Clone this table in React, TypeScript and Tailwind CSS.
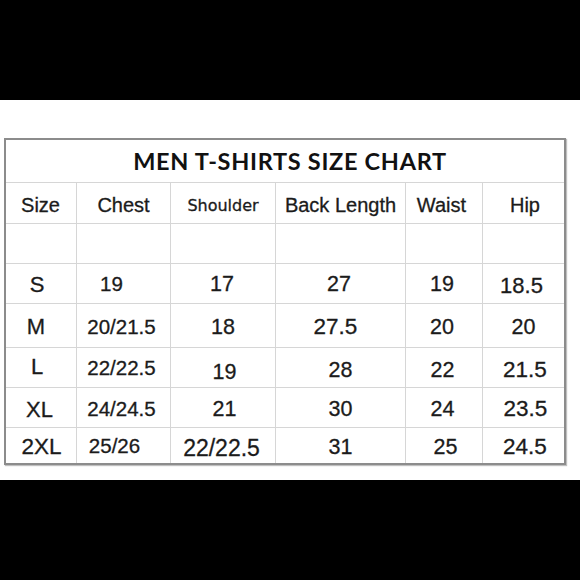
import React from "react";

type Cell = { t: string; c?: string };

const header = ["Size", "Chest", "Shoulder", "Back Length", "Waist", "Hip"];

const rows: Cell[][] = [
  [
    { t: "S", c: "text-[22px] pr-[8px] translate-y-[1px]" },
    { t: "19", c: "text-[20.5px] pr-[24px] translate-y-[1px]" },
    { t: "17", c: "text-[21.5px] pr-[2px] translate-y-[1px]" },
    { t: "27", c: "text-[21.5px] pr-[3px] translate-y-[1px]" },
    { t: "19", c: "text-[21.5px] pr-[4px] translate-y-[1px]" },
    { t: "18.5", c: "text-[22px] pr-[4px] translate-y-[2px]" },
  ],
  [
    { t: "M", c: "text-[22px] pr-[10px] translate-y-[1px]" },
    { t: "20/21.5", c: "text-[20.5px] pr-[4px] translate-y-[2px]" },
    { t: "18", c: "text-[21.5px] translate-y-[2px]" },
    { t: "27.5", c: "text-[22.5px] pr-[10px] translate-y-[2px]" },
    { t: "20", c: "text-[21.5px] pr-[4px] translate-y-[2px]" },
    { t: "20", c: "text-[21.5px] translate-y-[2px]" },
  ],
  [
    { t: "L", c: "text-[22px] pr-[8px] -translate-y-[1px]" },
    { t: "22/22.5", c: "text-[20.5px] pr-[4px] translate-y-[1px]" },
    { t: "19", c: "text-[21.5px] pl-[3px] translate-y-[5px]" },
    { t: "28", c: "text-[21.5px] translate-y-[3px]" },
    { t: "22", c: "text-[21.5px] pr-[3px] translate-y-[3px]" },
    { t: "21.5", c: "text-[22.5px] pl-[3px] translate-y-[3px]" },
  ],
  [
    { t: "XL", c: "text-[22px] pr-[3px] translate-y-[2px]" },
    { t: "24/24.5", c: "text-[20.5px] pr-[4px] translate-y-[2px]" },
    { t: "21", c: "text-[21.5px] pl-[3px] translate-y-[2px]" },
    { t: "30", c: "text-[21.5px] translate-y-[2px]" },
    { t: "24", c: "text-[21.5px] pr-[3px] translate-y-[2px]" },
    { t: "23.5", c: "text-[22.5px] pl-[4px] translate-y-[2px]" },
  ],
  [
    { t: "2XL", c: "text-[22.5px] pl-[1px] translate-y-[2px]" },
    { t: "25/26", c: "text-[20.5px] pr-[18px] translate-y-[1px]" },
    { t: "22/22.5", c: "text-[23px] pr-[3px] translate-y-[3px]" },
    { t: "31", c: "text-[21.5px] translate-y-[2px]" },
    { t: "25", c: "text-[21.5px] pl-[3px] translate-y-[2px]" },
    { t: "24.5", c: "text-[22.5px] pl-[3px] translate-y-[2px]" },
  ],
];

const headerCls = [
  "text-[20px] pr-[1px]",
  "text-[20px]",
  "text-[16px] font-['DejaVu_Sans',sans-serif] pt-[2px]",
  "text-[20px]",
  "text-[20px] pr-[5px]",
  "text-[20px] pl-[3px]",
];

export default function App() {
  return (
    <div className="w-[580px] h-[580px] bg-black flex flex-col font-['Liberation_Sans',Arial,sans-serif] text-[#1b1b1b]">
      <div className="h-[100px]" />
      <div className="h-[380px] bg-white pt-[38px] pl-[4px]">
        <div className="w-[562px] h-[327px] border-2 border-[#8c8c8c] bg-[#d6d6d6] grid grid-cols-[70px_93px_104px_129px_76px_81px] grid-rows-[42px_40px_39px_39px_43px_39px_39px_35px] gap-px shadow-[1px_1px_1px_rgba(0,0,0,0.25)]">
          <div className="col-span-6 bg-white flex items-center justify-center">
            <span className="font-['Lato',sans-serif] font-bold text-[23.5px] leading-none pl-[10px] text-[#111] tracking-[0.7px] translate-y-[1px]">
              MEN T-SHIRTS SIZE CHART
            </span>
          </div>
          {header.map((h, i) => (
            <div key={"h" + i} className="bg-white flex items-center justify-center">
              <span className={"leading-none translate-y-[1.5px] [-webkit-text-stroke:0.3px_#1b1b1b] " + headerCls[i]}>{h}</span>
            </div>
          ))}
          {header.map((_, i) => (
            <div key={"e" + i} className="bg-white" />
          ))}
          {rows.map((r, ri) =>
            r.map((cell, ci) => (
              <div key={ri + "-" + ci} className="bg-white flex items-center justify-center">
                <span className={"leading-none [-webkit-text-stroke:0.3px_#1b1b1b] " + (cell.c ?? "")}>{cell.t}</span>
              </div>
            ))
          )}
        </div>
      </div>
      <div className="flex-1" />
    </div>
  );
}
